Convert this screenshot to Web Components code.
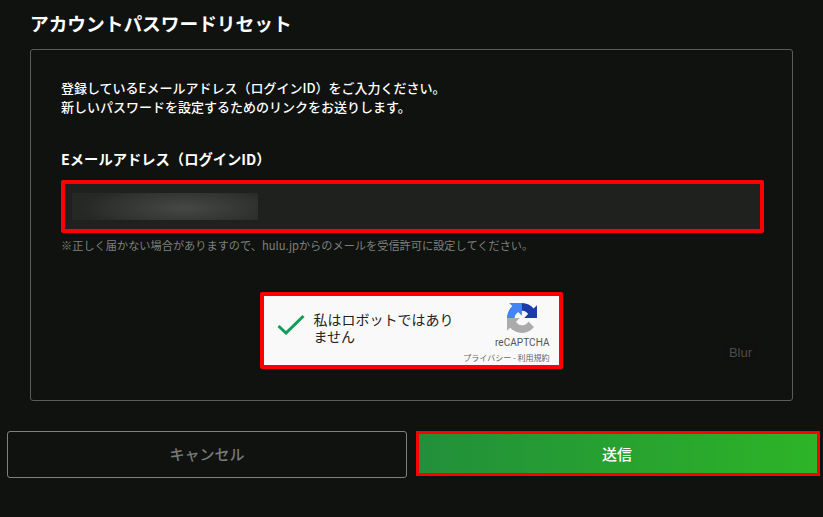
<!DOCTYPE html>
<html lang="ja">
<head>
<meta charset="utf-8">
<title>アカウントパスワードリセット</title>
<style>
  html, body { margin: 0; height: 100%; background: #101210; overflow: hidden; }
  body { font-family: "Noto Sans CJK JP", "Noto Sans", sans-serif; color: #fff; }
</style>
</head>
<body>
<reset-page>
  <reset-panel>
    <p slot="intro">登録しているEメールアドレス（ログインID）をご入力ください。<br>新しいパスワードを設定するためのリンクをお送りします。</p>
    <email-field slot="field" label="Eメールアドレス（ログインID）" note="※正しく届かない場合がありますので、hulu.jpからのメールを受信許可に設定してください。"></email-field>
    <recaptcha-box slot="captcha"></recaptcha-box>
  </reset-panel>
</reset-page>

<script>
class ResetPage extends HTMLElement {
  constructor() {
    super();
    this.attachShadow({ mode: "open" });
    this.shadowRoot.innerHTML = `
      <style>
        :host { display: block; width: 823px; height: 517px; box-sizing: border-box; padding-top: 9px; }
        h1 { margin: 0 0 13px 30px; font-size: 18.7px; line-height: 27px; font-weight: 700; color: #fff; }
        .panel { margin: 0 30px; }
        .buttons { display: flex; align-items: flex-start; gap: 9px; margin: 30px 3px 0 7px; }
        .cancel, .send {
          display: flex; align-items: center; justify-content: center;
          box-sizing: border-box; font-size: 15px; font-weight: 500;
        }
        .cancel { width: 400px; height: 47px; border: 1px solid #7c827e; border-radius: 3px; color: #777b78; padding-bottom: 3px; }
        .send {
          width: 404px; height: 45px; border: 3px solid #f00; color: #fff; padding: 0 2px 1px 0;
          background: linear-gradient(90deg, #228f3a, #2db427);
        }
      </style>
      <h1>アカウントパスワードリセット</h1>
      <div class="panel"><slot></slot></div>
      <div class="buttons">
        <div class="cancel">キャンセル</div>
        <div class="send">送信</div>
      </div>
    `;
  }
}

class ResetPanel extends HTMLElement {
  constructor() {
    super();
    this.attachShadow({ mode: "open" });
    this.shadowRoot.innerHTML = `
      <style>
        :host {
          display: block; position: relative; box-sizing: border-box; height: 352px;
          border: 1px solid #5a5c5a; border-radius: 3px; padding: 28px 28px 0 30px;
        }
        ::slotted(p) { margin: 0 0 33px; font-size: 13px; line-height: 19px; font-weight: 500; color: #fff; }
        .captcha { display: flex; justify-content: center; margin: 39px 0 0 -3px; }
        .blur {
          position: absolute; right: 34px; bottom: 39px; padding: 0 6px;
          font: 13px/17px "Liberation Sans", sans-serif; color: #4b4d4b; background: #0f100f;
        }
      </style>
      <slot name="intro"></slot>
      <slot name="field"></slot>
      <div class="captcha"><slot name="captcha"></slot></div>
      <div class="blur">Blur</div>
    `;
  }
}

class EmailField extends HTMLElement {
  constructor() {
    super();
    this.attachShadow({ mode: "open" });
    this.shadowRoot.innerHTML = `
      <style>
        :host { display: block; }
        label { display: block; font-size: 14.3px; line-height: 20px; font-weight: 700; color: #fff; margin-bottom: 11px; }
        .input {
          display: flex; align-items: center; box-sizing: border-box; height: 53px; padding-left: 7px;
          border: 4px solid #f00; border-radius: 2px; background: #1f211f;
        }
        .blurred {
          width: 186px; height: 27px;
          background: radial-gradient(ellipse 55% 90% at 60% 55%, #464846, #2f312f 75%, #262826);
        }
        .note { margin-top: 5px; font-size: 11.2px; line-height: 15px; color: #7d807d; }
      </style>
      <label></label>
      <div class="input"><div class="blurred"></div></div>
      <div class="note"></div>
    `;
    this.shadowRoot.querySelector("label").textContent = this.getAttribute("label");
    this.shadowRoot.querySelector(".note").textContent = this.getAttribute("note");
  }
}

class RecaptchaBox extends HTMLElement {
  constructor() {
    super();
    this.attachShadow({ mode: "open" });
    this.shadowRoot.innerHTML = `
      <style>
        :host {
          display: flex; box-sizing: border-box; width: 303px; height: 77px;
          border: 4px solid #f00; border-radius: 2px; background: #f9f9f9; color: #222;
        }
        .check { flex: none; width: 28px; height: 21px; margin: 18px 9px 0 13px; }
        .text { flex: none; width: 146px; margin-top: 15px; font-size: 14px; line-height: 17px; }
        .brand {
          flex: 1; min-width: 0; display: flex; flex-direction: column; align-items: flex-end;
          padding: 7px 9px 0 0; color: #555;
        }
        .brand svg { width: 30px; height: 30px; margin-right: 13px; }
        .name { font: 400 10px/12px Roboto, sans-serif; margin-top: 4px; letter-spacing: .05px; }
        .links { font-size: 8px; line-height: 11px; margin-top: 3px; white-space: nowrap; color: #666; }
      </style>
      <svg class="check" viewBox="0 0 28 21"><path d="M1.500 12l7.500 7L26.500 2" fill="none" stroke="#0f9d58" stroke-width="3"/></svg>
      <div class="text">私はロボットではありません</div>
      <div class="brand">
        <svg viewBox="0 0 64 64">
          <path d="M64 31.955l-.033-1.37V4.687l-7.160 7.160C50.948 4.674 42.033.093 32.050.093c-10.400 0-19.622 4.960-25.458 12.640l11.736 11.860a15.550 15.550 0 0 1 4.754-5.334c2.050-1.600 4.952-2.906 8.968-2.906.485 0 .860.057 1.135.163 4.976.393 9.288 3.140 11.828 7.124l-8.307 8.307 26.297.001" fill="#1c3aa9"/>
          <path d="M31.862 0l-1.370.033H4.594l7.160 7.160C4.580 13.052 0 21.967 0 31.950c0 10.400 4.960 19.622 12.640 25.458l11.860-11.736a15.550 15.550 0 0 1-5.334-4.754c-1.600-2.050-2.906-4.952-2.906-8.968 0-.485.057-.860.163-1.135.393-4.976 3.140-9.288 7.124-11.828l8.307 8.307L31.862 0" fill="#4285f4"/>
          <path d="M.001 31.955l.033 1.370v25.898l7.160-7.160c5.860 7.173 14.775 11.754 24.760 11.754 10.400 0 19.622-4.960 25.458-12.640l-11.860-11.736a15.550 15.550 0 0 1-4.754 5.334c-2.050 1.600-4.952 2.906-8.968 2.906-.485 0-.860-.057-1.135-.163-4.976-.393-9.288-3.140-11.828-7.124l8.307-8.307-26.297-.001" fill="#ababab"/>
        </svg>
        <div class="name">reCAPTCHA</div>
        <div class="links">プライバシー - 利用規約</div>
      </div>
    `;
  }
}

customElements.define("reset-page", ResetPage);
customElements.define("reset-panel", ResetPanel);
customElements.define("email-field", EmailField);
customElements.define("recaptcha-box", RecaptchaBox);
</script>
</body>
</html>
